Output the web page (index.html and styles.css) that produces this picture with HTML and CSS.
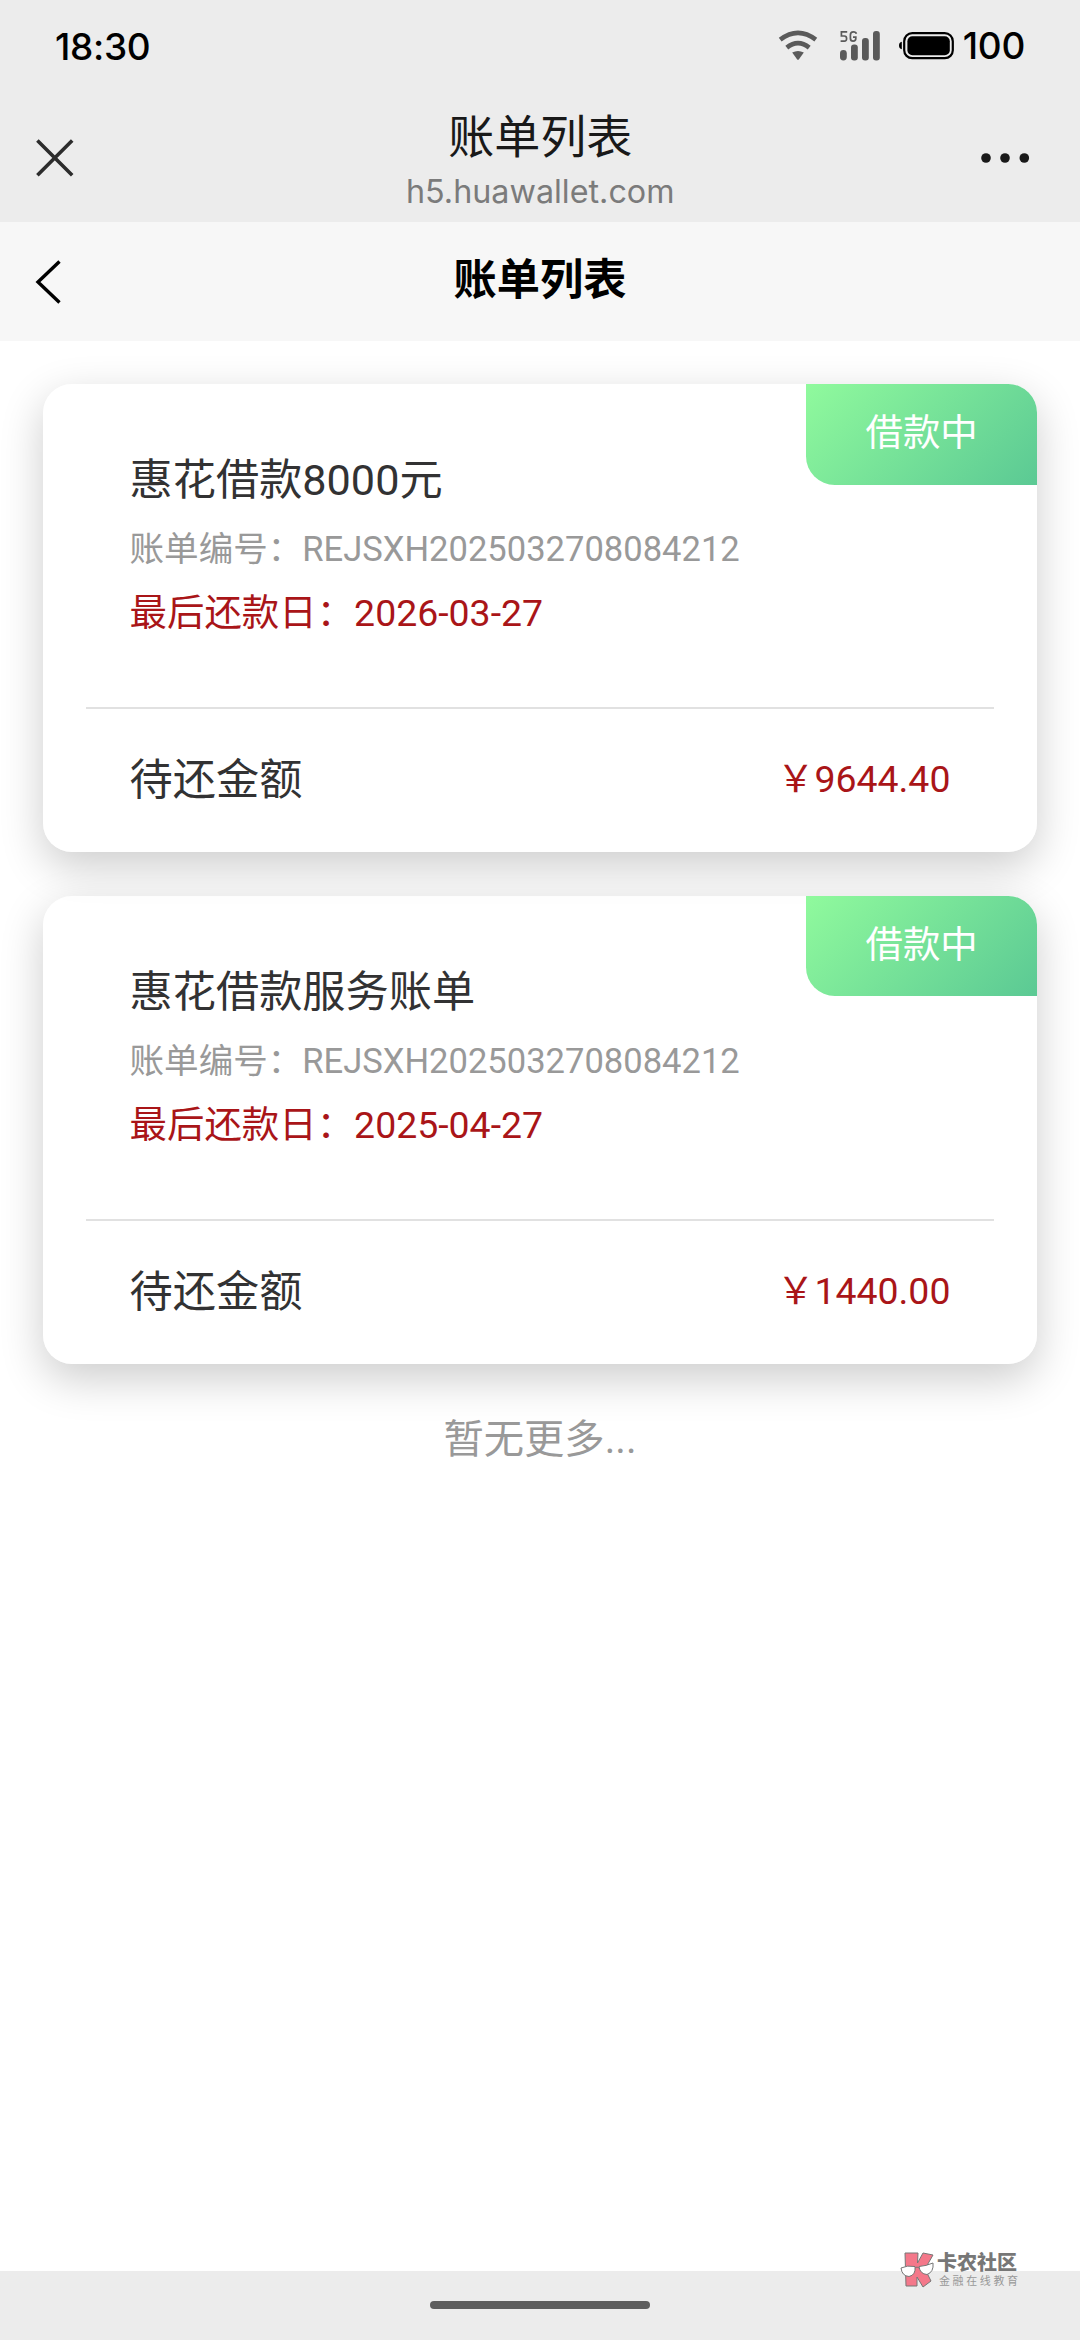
FILE: index.html
```html
<!DOCTYPE html>
<html lang="zh-CN">
<head>
<meta charset="utf-8">
<title>账单列表</title>
<link rel="stylesheet" href="styles.css">
</head>
<body>
<div class="screen">
  <header class="chrome">
    <div class="status">
      <span class="clock">18:30</span>
      <div class="indicators">
        <svg class="wifi" width="40" height="32" viewBox="0 0 40 32">
          <g fill="none" stroke="#5a5a5a" stroke-width="4.6">
            <path d="M2.2 9.6Q20-4 37.8 9.6"/>
            <path d="M8.8 17.6Q20 8.6 31.2 17.6"/>
          </g>
          <path d="M14.2 22.6Q20 19.6 25.8 22.6L20.8 29.4Q20 30 19.2 29.4Z" fill="#5a5a5a"/>
        </svg>
        <div class="cell">
          <svg width="42" height="32" viewBox="0 0 42 32" fill="#5a5a5a">
            <rect x="1" y="20" width="6.8" height="10.4" rx="3.4"/>
            <rect x="12" y="14.5" width="6.8" height="15.9" rx="3"/>
            <rect x="23" y="8" width="6.8" height="22.4" rx="3"/>
            <rect x="34" y="1" width="6.8" height="29.4" rx="3"/>
            <g fill="none" stroke="#5a5a5a" stroke-width="1.7">
              <path d="M8.2 1.9H2.4V6H5.4Q7.6 6 7.6 8.6T5.4 11.2H1.6"/>
              <path d="M17.4 3.8Q17 1.9 14.4 1.9Q11.4 1.9 11.4 5V8.2Q11.4 11.2 14.2 11.2Q16.8 11.2 16.8 8.6V7.2H14"/>
            </g>
          </svg>
        </div>
        <svg class="battery" width="56" height="30" viewBox="0 0 56 30">
          <path d="M2.8 10.8V18.2Q0 17.6 0 14.5T2.8 10.8Z"/>
          <rect x="5.2" y="2.2" width="48.6" height="25" rx="8" fill="none" stroke="#000" stroke-width="2.2"/>
          <rect x="8.4" y="5.2" width="42.4" height="19" rx="5"/>
        </svg>
        <span class="level">100</span>
      </div>
    </div>
    <div class="webbar">
      <svg class="close" width="38" height="38" viewBox="0 0 38 38"><path d="M1.4 1.4L36.2 36.2M36.2 1.4L1.4 36.2" stroke="#2c2c2c" stroke-width="3.6"/></svg>
      <div class="webtitle">
        <div class="name">账单列表</div>
        <div class="host">h5.huawallet.com</div>
      </div>
      <svg class="more" width="50" height="12" viewBox="0 0 50 12" fill="#191919"><circle cx="6" cy="6" r="4.8"/><circle cx="25" cy="6" r="4.8"/><circle cx="44.3" cy="6" r="4.8"/></svg>
    </div>
  </header>
  <nav class="pagebar">
    <svg class="back" width="28" height="46" viewBox="0 0 28 46"><path d="M25.5 2.6L4 23L25.5 43.4" fill="none" stroke="#000" stroke-width="3.4"/></svg>
    <h1>账单列表</h1>
  </nav>
  <main class="list">
    <article class="card">
      <div class="badge">借款中</div>
      <div class="info">
        <h2>惠花借款8000元</h2>
        <p class="number">账单编号：REJSXH2025032708084212</p>
        <p class="due">最后还款日：2026-03-27</p>
      </div>
      <div class="total">
        <span>待还金额</span>
        <span class="amount">￥9644.40</span>
      </div>
    </article>
    <article class="card">
      <div class="badge">借款中</div>
      <div class="info">
        <h2>惠花借款服务账单</h2>
        <p class="number">账单编号：REJSXH2025032708084212</p>
        <p class="due">最后还款日：2025-04-27</p>
      </div>
      <div class="total">
        <span>待还金额</span>
        <span class="amount">￥1440.00</span>
      </div>
    </article>
    <p class="end">暂无更多...</p>
  </main>
  <footer class="homebar"><span class="pill"></span></footer>
  <div class="watermark">
    <svg width="34" height="36" viewBox="0 0 34 36" stroke="#777" stroke-width="1">
      <path d="M5 1H18L17.5 11L23 1L33 3L25 17L31 29L23 35L17 25V34H6Z" fill="#f4788a"/>
      <path d="M1 16Q7 13 15 14.5Q16 23 9 24.5Q2 24 1 16ZM19 14.5Q26 14 33 11Q34 20 27 22.5Q20 22 19 14.5Z" fill="#fff"/>
      <path d="M15 16Q17 14 19 16" fill="none"/>
    </svg>
    <div class="wmtext">
      <div class="brand">卡农社区</div>
      <div class="slogan">金融在线教育</div>
    </div>
  </div>
</div>
</body>
</html>
```
FILE: styles.css
```css
* { box-sizing: border-box; margin: 0; padding: 0; }
body { background: #fff; font-family: Roboto, "Noto Sans CJK SC", sans-serif; }
svg { display: block; flex: none; }
.screen { position: relative; width: 1080px; height: 2340px; display: flex; flex-direction: column; overflow: hidden; }

.chrome { height: 221.5px; flex: none; background: #ececec; font-family: Inter, "Noto Sans CJK SC", sans-serif; }
.status { height: 92px; padding: 0 55px; display: flex; align-items: center; justify-content: space-between; color: #000; }
.clock { font-size: 37px; line-height: 44px; font-weight: 450; letter-spacing: -.3px; padding-top: 2px; }
.indicators { display: flex; align-items: center; }
.wifi { margin-right: 21px; }
.cell { margin-right: 18px; }
.level { font-size: 37px; line-height: 44px; font-weight: 450; letter-spacing: -.3px; margin-left: 8px; }
.webbar { height: 129px; padding: 0 50px 0 35.5px; display: grid; grid-template-columns: 120px 1fr 105px; align-items: start; }
.close { margin-top: 46.5px; }
.more { margin-top: 59.5px; justify-self: end; }
.webtitle { text-align: center; }
.name { font-size: 46px; line-height: 60px; margin-top: 14px; color: #191919; }
.host { font-size: 32.3px; line-height: 40px; margin-top: 6px; color: #7b7b7b; }

.pagebar { height: 119.5px; flex: none; background: #f7f7f7; display: grid; grid-template-columns: 70px 1fr 70px; align-items: center; padding: 0 34px; }
.back { margin-top: 2px; }
.pagebar h1 { font-size: 43.2px; line-height: 60px; font-weight: 700; text-align: center; color: #000; }

.list { flex: 1; padding: 43.2px 43.2px 0; }
.card { position: relative; height: 468.3px; margin-bottom: 43.2px; border-radius: 28.8px; background: rgba(255, 255, 255, .5); box-shadow: 0 14.4px 43.2px rgba(0, 0, 0, .2); padding: 0 43.2px; color: #323233; }
.badge { position: absolute; top: 0; right: 0; width: 230.4px; height: 100.8px; line-height: 99px; border-radius: 0 28.8px 0 28.8px; background: linear-gradient(135deg, #90fa9d, #5bc994); color: #fff; font-size: 37.44px; text-align: center; }
.info { height: 325px; padding: 66px 43.2px 0; border-bottom: 2px solid #e1e1e1; }
.info h2 { font-size: 43.2px; line-height: 62px; font-weight: 400; }
.number { font-size: 34.56px; line-height: 50px; margin-top: 12px; color: #999; }
.due { font-size: 37.44px; line-height: 54px; margin-top: 12px; color: #a91518; }
.total { height: 143px; padding: 0 43.2px 9px; display: flex; align-items: center; justify-content: space-between; font-size: 43.2px; }
.amount { font-size: 37.44px; color: #a91518; }
.end { font-size: 40.32px; line-height: 60px; margin-top: 46px; text-align: center; color: #999; }

.homebar { height: 69px; flex: none; background: #ececec; display: flex; justify-content: center; align-items: center; padding-bottom: 1px; }
.pill { width: 220px; height: 8px; border-radius: 4px; background: #5e5e5e; }

.watermark { position: absolute; left: 900px; top: 2252px; display: flex; gap: 3px; }
.wmtext { color: #777; white-space: nowrap; }
.brand { font-size: 20px; line-height: 23px; font-weight: 900; }
.slogan { font-size: 11px; line-height: 14px; letter-spacing: 2.6px; color: #999; padding-left: 2px; }
```
